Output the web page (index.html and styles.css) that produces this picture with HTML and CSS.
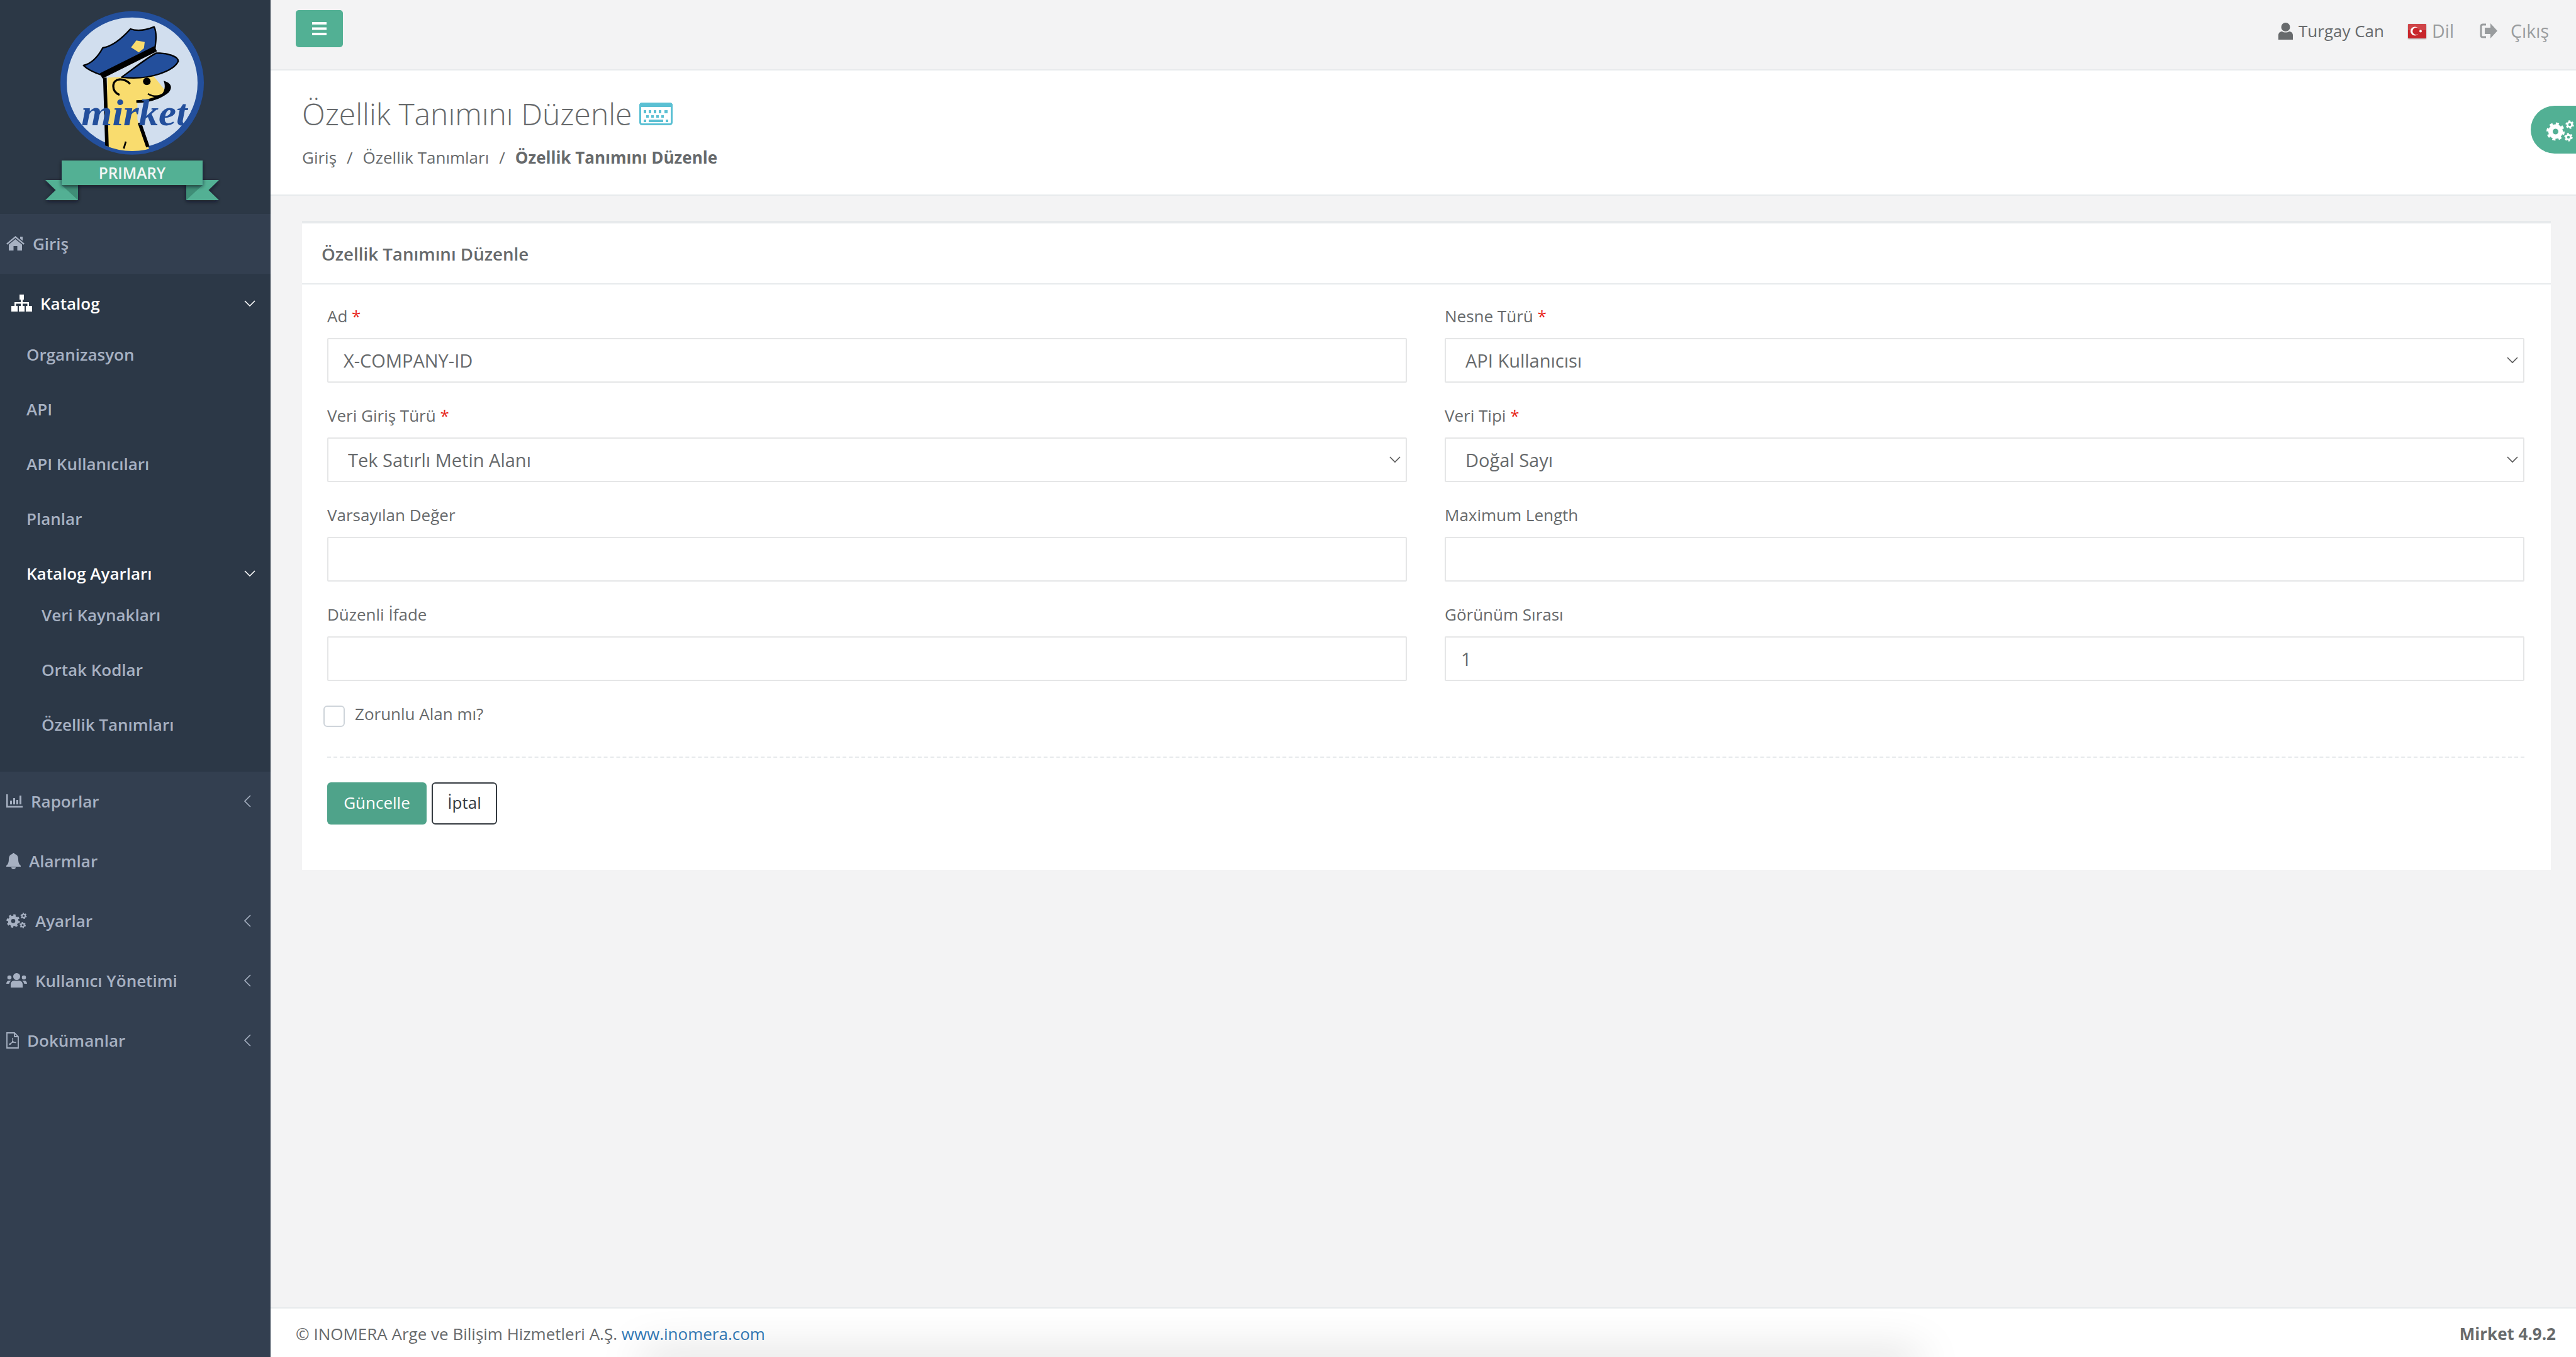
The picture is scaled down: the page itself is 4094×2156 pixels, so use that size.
FILE: index.html

```html
<!DOCTYPE html>
<html lang="tr">
<head>
  <meta charset="UTF-8" />
  <title>Özellik Tanımını Düzenle</title>
  <link rel="stylesheet" href="styles.css">
</head>
<body>

<svg class="defs" width="0" height="0">
  <defs>
    <symbol id="gears" viewBox="0 0 44 34">
      <circle cx="14.500" cy="18" r="11.500" fill="none" stroke="currentColor" stroke-width="6" stroke-dasharray="4.500 4.530"/>
      <circle cx="14.500" cy="18" r="8" fill="none" stroke="currentColor" stroke-width="7"/>
      <circle cx="37" cy="7" r="5.300" fill="none" stroke="currentColor" stroke-width="2.800" stroke-dasharray="2.800 2.750"/>
      <circle cx="37" cy="7" r="3.600" fill="none" stroke="currentColor" stroke-width="2.800"/>
      <circle cx="35" cy="27" r="5.300" fill="none" stroke="currentColor" stroke-width="2.800" stroke-dasharray="2.800 2.750"/>
      <circle cx="35" cy="27" r="3.600" fill="none" stroke="currentColor" stroke-width="2.800"/>
    </symbol>
    <symbol id="chev-down" viewBox="0 0 18 10">
      <path d="M1 1l8 8 8-8" fill="none" stroke="currentColor" stroke-width="1.600"/>
    </symbol>
    <symbol id="chev-left" viewBox="0 0 12 20">
      <path d="M11 1L2 10l9 9" fill="none" stroke="currentColor" stroke-width="1.600"/>
    </symbol>
  </defs>
</svg>

<div class="layout">
  <nav class="sidebar">
    <div class="logo">
      <svg viewBox="0 0 1290 1020" width="430" height="340">
        <defs>
          <clipPath id="badge-clip"><circle cx="630" cy="395" r="325"/></clipPath>
          <filter id="ribbon-shadow" x="-20%" y="-20%" width="140%" height="160%">
            <feDropShadow dx="0" dy="6" stdDeviation="9" flood-color="#10151e" flood-opacity=".7"/>
          </filter>
        </defs>
        <circle cx="630" cy="395" r="327" fill="#d1deee" stroke="#234f9c" stroke-width="30"/>
        <g clip-path="url(#badge-clip)">
          <path d="M512 370L505 720H715L655 570V490C710 490 770 465 795 440L730 360Z" fill="#f9dc6e"/>
          <path d="M500 370L510 700M665 585L705 700" fill="none" stroke="#000" stroke-width="17"/>
          <path d="M650 490C710 492 770 470 805 440C825 415 815 395 780 385C790 410 785 430 775 445C730 470 690 478 650 478Z" fill="#000"/>
          <path d="M620 400C590 368 540 372 540 410C540 430 553 445 570 452" fill="none" stroke="#000" stroke-width="10"/>
          <path d="M705 447C730 463 755 462 782 450" fill="none" stroke="#000" stroke-width="8"/>
          <circle cx="700" cy="388" r="18" fill="#000"/>
          <path d="M600 675L590 708" stroke="#000" stroke-width="8" fill="none"/>
        </g>
        <path d="M398 312C440 302 470 265 490 228C530 222 575 190 622 138C655 150 700 142 735 128C750 160 742 205 738 235L490 360C460 350 420 335 398 312Z" fill="#234f9c" stroke="#000" stroke-width="7" stroke-linejoin="round"/>
        <path d="M580 368C640 325 700 275 745 253C795 252 850 268 850 292C830 335 720 385 580 368Z" fill="#234f9c" stroke="#000" stroke-width="7" stroke-linejoin="round"/>
        <path d="M482 362L742 232" stroke="#000" stroke-width="28"/>
        <path d="M625 226L650 193L690 200L686 230L662 250Z" fill="#f9dc6e"/>
        <text class="logo-script" x="388" y="596" textLength="505" lengthAdjust="spacingAndGlyphs">mirket</text>
        <path d="M216 858H372V954H216L266 906Z" fill="#52b094" filter="url(#ribbon-shadow)"/>
        <path d="M1044 858H888V954H1044L994 906Z" fill="#52b094" filter="url(#ribbon-shadow)"/>
        <path d="M294 882H372V954Z" fill="#3f8e77"/>
        <path d="M966 882H888V954Z" fill="#3f8e77"/>
        <rect x="294" y="765" width="672" height="117" fill="#52b094" filter="url(#ribbon-shadow)"/>
        <text class="logo-ribbon" x="630" y="851" text-anchor="middle">PRIMARY</text>
      </svg>
    </div>

    <a class="nav-item">
      <svg class="nav-icon" width="29" height="23" viewBox="0 0 29 23"><path d="M14.500 0L29 12l-1.600 1.800L14.500 3 1.600 13.800 0 12 14.500 0zM22 1h4v6.500l-4-3.300V1zM14.500 5L25 13.600V23h-7.500v-7h-6v7H4v-9.400L14.500 5z" fill="currentColor"/></svg>
      <span>Giriş</span>
    </a>

    <div class="nav-group">
      <a class="nav-item nav-active">
        <svg class="nav-icon sitemap" width="33" height="27" viewBox="0 0 33 27"><path d="M13 0h7v8h-2v4h10v6h-2.500v-3.600H18V18h-3v-3.600H7.500V18H5v-6h10V8h-2V0zM0 18h10v9H0zM12 18h9v9h-9zM23 18h10v9H23z" fill="currentColor"/></svg>
        <span>Katalog</span>
        <svg class="nav-arrow arrow-down" width="18" height="10"><use href="#chev-down"/></svg>
      </a>
      <a class="sub-item">Organizasyon</a>
      <a class="sub-item">API</a>
      <a class="sub-item">API Kullanıcıları</a>
      <a class="sub-item">Planlar</a>
      <a class="sub-item sub-active">
        <span>Katalog Ayarları</span>
        <svg class="nav-arrow arrow-down" width="18" height="10"><use href="#chev-down"/></svg>
      </a>
      <a class="subsub-item">Veri Kaynakları</a>
      <a class="subsub-item">Ortak Kodlar</a>
      <a class="subsub-item">Özellik Tanımları</a>
    </div>

    <a class="nav-item">
      <svg class="nav-icon" width="26" height="21" viewBox="0 0 26 21"><path d="M0 0h2.500v18.500H26V21H0zM6 10h3v6H6zM11 6h3v10h-3zM16 9h3v7h-3zM21 2h3v14h-3z" fill="currentColor"/></svg>
      <span>Raporlar</span>
      <svg class="nav-arrow" width="12" height="20"><use href="#chev-left"/></svg>
    </a>
    <a class="nav-item">
      <svg class="nav-icon" width="23" height="26" viewBox="0 0 23 26"><path d="M11.500 0c1 0 1.600.7 1.600 1.700C17 2.500 19 5.500 19 10c0 6 1.500 8 4 10.500V22H0v-1.500C2.500 18 4 16 4 10c0-4.500 2-7.500 5.900-8.300C9.900.7 10.500 0 11.500 0zM8 23h7c0 1.700-1.500 3-3.500 3S8 24.700 8 23z" fill="currentColor"/></svg>
      <span>Alarmlar</span>
    </a>
    <a class="nav-item">
      <svg class="nav-icon" width="33" height="25"><use href="#gears"/></svg>
      <span>Ayarlar</span>
      <svg class="nav-arrow" width="12" height="20"><use href="#chev-left"/></svg>
    </a>
    <a class="nav-item">
      <svg class="nav-icon" width="33" height="23" viewBox="0 0 33 23"><circle cx="16.500" cy="5.500" r="5.500" fill="currentColor"/><circle cx="5" cy="7" r="3.300" fill="currentColor"/><circle cx="28" cy="7" r="3.300" fill="currentColor"/><path d="M7 23v-5c0-4 3-6 6-6h7c3 0 6 2 6 6v5zM0 17c0-3 2-5 4-5h4c-2 1-3 3-3.500 5zM33 17c0-3-2-5-4-5h-4c2 1 3 3 3.500 5z" fill="currentColor"/></svg>
      <span>Kullanıcı Yönetimi</span>
      <svg class="nav-arrow" width="12" height="20"><use href="#chev-left"/></svg>
    </a>
    <a class="nav-item">
      <svg class="nav-icon" width="20" height="26" viewBox="0 0 20 26"><path d="M1 1h12l6 6v18H1zM13 1v6h6" fill="none" stroke="currentColor" stroke-width="1.800"/><path d="M9.500 9c1 3 1 5-1 8-1.500 2-3 3-3.500 2.500C4.500 18 9 15.500 15 16c.5 1-2 1.500-5-2" fill="none" stroke="currentColor" stroke-width="1.200"/></svg>
      <span>Dokümanlar</span>
      <svg class="nav-arrow" width="12" height="20"><use href="#chev-left"/></svg>
    </a>
  </nav>

  <div class="main">
    <header class="topbar">
      <button class="menu-btn">
        <svg width="23" height="21" viewBox="0 0 23 21"><path d="M0 0h23v4H0zM0 8.500h23v4H0zM0 17h23v4H0z" fill="#fff"/></svg>
      </button>
      <div class="top-links">
        <span class="top-link user">
          <svg width="23" height="27" viewBox="0 0 23 27"><circle cx="11.500" cy="7" r="7" fill="currentColor"/><path d="M0 27v-7c0-4 3-6 6-6 3 2 8 2 11 0 3 0 6 2 6 6v7z" fill="currentColor"/></svg>
          Turgay Can
        </span>
        <span class="top-link lang">
          <svg class="flag" width="29" height="23" viewBox="0 0 29 23"><rect width="29" height="23" rx="1" fill="#c8262b"/><rect width="29" height="10" rx="1" fill="#fff" opacity=".14"/><circle cx="11" cy="11.500" r="7" fill="#fff"/><circle cx="13" cy="11.500" r="5.700" fill="#c8262b"/><circle cx="20" cy="11.500" r="2" fill="#fff"/></svg>
          Dil
        </span>
        <span class="top-link logout">
          <svg width="28" height="24" viewBox="0 0 28 24"><path d="M10 2H5C3 2 2 3 2 5v14c0 2 1 3 3 3h5" fill="none" stroke="currentColor" stroke-width="3"/><path d="M17 0l11 12-11 12v-7H8V7h9z" fill="currentColor"/></svg>
          Çıkış
        </span>
      </div>
    </header>

    <section class="page-head">
      <h1>Özellik Tanımını Düzenle
        <svg class="kbd" width="53" height="36" viewBox="0 0 53 36"><rect x="1.500" y="1.500" width="50" height="33" rx="3" fill="none" stroke="#5bc0d3" stroke-width="3"/><path d="M0 4c0-2 2-4 4-4h45c2 0 4 2 4 4v3H0z" fill="#5bc0d3"/><path d="M7 12h4v5H7zM15 12h4v5h-4zM23 12h4v5h-4zM31 12h4v5h-4zM40 12h5v5h-5zM11 20h4v4h-4zM19 20h4v4h-4zM27 20h4v4h-4zM35 20h4v4h-4zM7 27h4v4H7zM15 27h23v4H15zM42 27h4v4h-4z" fill="#5bc0d3"/></svg>
      </h1>
      <ol class="crumbs">
        <li>Giriş</li>
        <li>Özellik Tanımları</li>
        <li class="current">Özellik Tanımını Düzenle</li>
      </ol>
    </section>

    <button class="float-btn"><svg width="44" height="34"><use href="#gears"/></svg></button>

    <div class="content">
      <div class="card">
        <div class="card-title">Özellik Tanımını Düzenle</div>
        <form class="card-body">
          <div class="form-grid">
            <div class="field">
              <label>Ad <i>*</i></label>
              <input type="text" value="X-COMPANY-ID">
            </div>
            <div class="field">
              <label>Nesne Türü <i>*</i></label>
              <select><option>API Kullanıcısı</option></select>
            </div>
            <div class="field">
              <label>Veri Giriş Türü <i>*</i></label>
              <select><option>Tek Satırlı Metin Alanı</option></select>
            </div>
            <div class="field">
              <label>Veri Tipi <i>*</i></label>
              <select><option>Doğal Sayı</option></select>
            </div>
            <div class="field">
              <label>Varsayılan Değer</label>
              <input type="text">
            </div>
            <div class="field">
              <label>Maximum Length</label>
              <input type="text">
            </div>
            <div class="field">
              <label>Düzenli İfade</label>
              <input type="text">
            </div>
            <div class="field">
              <label>Görünüm Sırası</label>
              <input type="text" value="1">
            </div>
          </div>
          <label class="check"><span class="box"></span>Zorunlu Alan mı?</label>
          <div class="dashed"></div>
          <div class="actions">
            <button type="button" class="btn btn-save">Güncelle</button>
            <button type="button" class="btn btn-cancel">İptal</button>
          </div>
        </form>
      </div>
    </div>

    <footer class="footer">
      <span>© INOMERA Arge ve Bilişim Hizmetleri A.Ş. <a>www.inomera.com</a></span>
      <strong>Mirket 4.9.2</strong>
    </footer>
  </div>
</div>

</body>
</html>
```

FILE: styles.css

```css
* {
  box-sizing: border-box;
}
html, body {
  margin: 0;
  height: 100%;
}
body {
  font-family: "Open Sans", sans-serif;
  font-size: 26px;
  color: #676a6c;
  background: #f3f3f4;
  overflow: hidden;
}
.defs {
  position: absolute;
}
.layout {
  display: flex;
  height: 100%;
}

/* sidebar */
.sidebar {
  width: 430px;
  flex: none;
  background: #333f50;
  color: #a7b1c2;
  font-weight: 600;
  font-size: 26px;
}
.logo {
  height: 340px;
  background: #2c3846;
}
.logo svg {
  display: block;
}
.logo-script {
  font-family: "Liberation Serif", serif;
  font-style: italic;
  font-weight: 700;
  font-size: 175px;
  fill: #234f9c;
}
.logo-ribbon {
  font-family: "Open Sans", sans-serif;
  font-weight: 600;
  font-size: 73px;
  fill: #f4f6f6;
}
.nav-item {
  display: flex;
  align-items: center;
  height: 95px;
  padding: 0 31px 2px 10px;
}
.nav-icon {
  flex: none;
  margin-right: 13px;
}
.nav-arrow {
  margin-left: auto;
  flex: none;
}
.arrow-down {
  margin-right: -7px;
}
.nav-group {
  background: #2c3847;
  height: 791px;
}
.nav-active {
  color: #fff;
  padding-left: 18px;
}
.sub-item, .subsub-item {
  display: flex;
  align-items: center;
  height: 87px;
  padding: 0 31px 0 42px;
}
.sub-item:nth-of-type(2) {
  margin-top: -11px;
}
.sub-active {
  color: #fff;
  margin-bottom: -21px;
}
.subsub-item {
  padding-left: 66px;
}

/* top */
.main {
  flex: 1;
  display: flex;
  flex-direction: column;
  position: relative;
  min-width: 0;
}
.topbar {
  height: 112px;
  flex: none;
  border-bottom: 2px solid #e7eaec;
  display: flex;
  justify-content: space-between;
  padding: 16px 43px 0 40px;
}
.menu-btn {
  width: 75px;
  height: 59px;
  border: none;
  border-radius: 5px;
  background: #52b094;
  display: flex;
  align-items: center;
  justify-content: center;
}
.top-links {
  display: flex;
  height: 63px;
  align-items: center;
  gap: 38px;
  padding-top: 3px;
}
.top-link {
  display: flex;
  align-items: center;
  gap: 9px;
}
.lang, .logout {
  color: #999c9e;
  font-size: 28.500px;
}
.logout {
  gap: 21px;
  margin-left: 3px;
}
.flag {
  filter: drop-shadow(0 1px 1px rgba(0,0,0,.3));
}

.page-head {
  height: 199px;
  flex: none;
  background: #fff;
  border-bottom: 2px solid #e7eaec;
  padding: 35px 0 0 50px;
}
.page-head h1 {
  margin: 0;
  font-size: 48px;
  font-weight: 300;
  line-height: 68px;
  display: flex;
  align-items: center;
  gap: 12px;
}
.crumbs {
  list-style: none;
  display: flex;
  margin: 17px 0 0;
  padding: 0;
  font-size: 26px;
  line-height: 36px;
}
.crumbs li + li::before {
  content: "/";
  padding: 0 16px;
}
.crumbs .current {
  font-weight: 700;
}
.crumbs .current::before {
  font-weight: 400;
}
.float-btn {
  position: absolute;
  top: 168px;
  right: 0;
  width: 72px;
  height: 76px;
  border: none;
  border-radius: 38px 0 0 38px;
  background: #52b094;
  color: #fff;
  padding: 4px 0 0 25px;
  text-align: left;
}
.float-btn svg {
  display: block;
}

.content {
  flex: 1;
  padding: 40px 40px 0 50px;
}
.card {
  background: #fff;
  border-top: 4px solid #e7eaec;
  height: 1031px;
}
.card-title {
  height: 97px;
  border-bottom: 2px solid #e7eaec;
  padding: 30px 0 0 31px;
  font-weight: 600;
  line-height: 36px;
  font-size: 27.700px;
}
.card-body {
  padding: 31px 42px 0 40px;
}
.form-grid {
  display: grid;
  grid-template-columns: 1fr 1fr;
  column-gap: 60px;
  row-gap: 33px;
}
.field label {
  display: block;
  line-height: 39px;
  margin-bottom: 15px;
}
.field i {
  color: #e8261c;
  font-style: normal;
}
.field input, .field select {
  display: block;
  width: 100%;
  height: 71px;
  border: 2px solid #e5e6e7;
  border-radius: 2px;
  background: #fff;
  font-family: inherit;
  font-size: 29px;
  color: #676a6c;
  padding: 0 24px;
  outline: none;
}
.field select {
  appearance: none;
  padding-left: 31px;
  background-image: url("data:image/svg+xml,%3Csvg xmlns='http://www.w3.org/2000/svg' width='18' height='11'%3E%3Cpath d='M1 1l8 8 8-8' fill='none' stroke='%23555' stroke-width='1.600'/%3E%3C/svg%3E");
  background-repeat: no-repeat;
  background-position: right 8px center;
}
.check {
  display: flex;
  align-items: center;
  gap: 16px;
  margin: 32px 0 0 -6px;
  line-height: 39px;
}
.box {
  width: 34px;
  height: 34px;
  border: 2px solid #ced4da;
  border-radius: 6px;
  margin-top: 7px;
}
.dashed {
  border-top: 2px dashed #e7eaec;
  margin-top: 47px;
}
.actions {
  display: flex;
  gap: 8px;
  margin-top: 39px;
}
.btn {
  height: 67px;
  border-radius: 6px;
  font-family: inherit;
  font-size: 26px;
  padding: 0 0 3px;
}
.btn-save {
  width: 158px;
  border: none;
  background: #4fa38a;
  color: #fff;
}
.btn-cancel {
  width: 104px;
  border: 2px solid #343a40;
  background: #fff;
  color: #343a40;
}

.footer {
  height: 79px;
  flex: none;
  background: #fff;
  border-top: 2px solid #e7eaec;
  display: flex;
  justify-content: space-between;
  padding: 22px 32px 0 40px;
  line-height: 36px;
  position: relative;
  overflow: hidden;
}
.footer a {
  color: #337ab7;
}
.footer::after {
  content: "";
  position: absolute;
  left: 590px;
  bottom: -20px;
  width: 2030px;
  height: 20px;
  box-shadow: 0 0 70px rgba(0,0,0,.28);
}
```
